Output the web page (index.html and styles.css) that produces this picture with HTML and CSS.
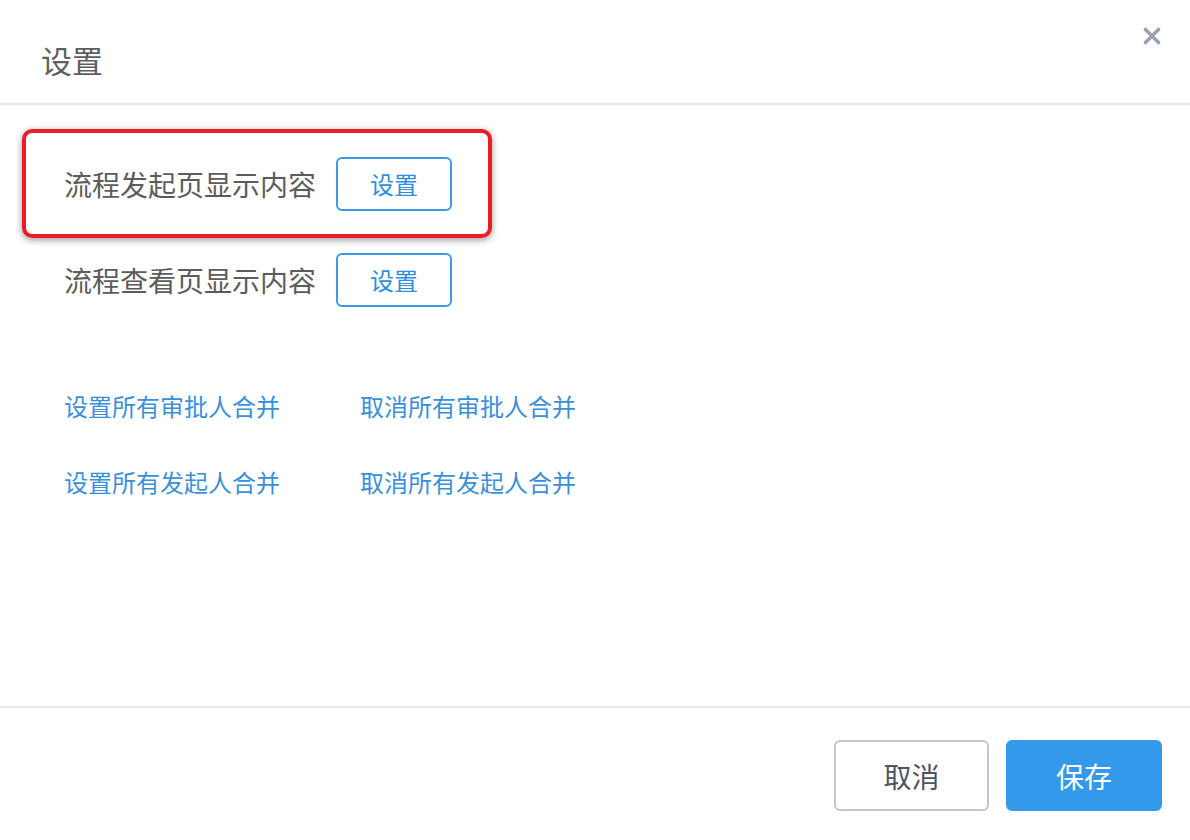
FILE: index.html
```html
<!DOCTYPE html>
<html lang="zh-CN">
<head>
<meta charset="utf-8">
<title>设置</title>
<link rel="stylesheet" href="styles.css">
</head>
<body>
<div class="dialog">
  <header class="header">
    <h1 class="title">设置</h1>
    <button class="close" aria-label="关闭">
      <svg width="18" height="18" viewBox="0 0 18 18"><path d="M2.5 2.5 L15.5 15.5 M15.5 2.5 L2.5 15.5" stroke="#9ba1ad" stroke-width="3.6" stroke-linecap="round" fill="none"/></svg>
    </button>
  </header>
  <main class="main">
    <div class="rows">
      <div class="row">
        <span class="label">流程发起页显示内容</span>
        <button class="btn-outline">设置</button>
      </div>
      <div class="row">
        <span class="label">流程查看页显示内容</span>
        <button class="btn-outline">设置</button>
      </div>
    </div>
    <div class="links">
      <a class="link">设置所有审批人合并</a>
      <a class="link">取消所有审批人合并</a>
      <a class="link">设置所有发起人合并</a>
      <a class="link">取消所有发起人合并</a>
    </div>
    <div class="highlight"></div>
  </main>
  <footer class="footer">
    <button class="btn btn-cancel">取消</button>
    <button class="btn btn-primary">保存</button>
  </footer>
</div>
</body>
</html>
```

FILE: styles.css
```css
* { box-sizing: border-box; }
html, body { margin: 0; padding: 0; background: #fff; }
body {
  font-family: "Noto Sans CJK SC", "Noto Sans", "Liberation Sans", sans-serif;
}
.dialog {
  position: relative;
  width: 1190px;
  height: 840px;
  display: flex;
  flex-direction: column;
  background: #fff;
}
.header {
  position: relative;
  height: 105px;
  padding: 40px 0 0 41px;
  border-bottom: 2px solid #e9e9e9;
}
.title {
  margin: 0;
  font-size: 31px;
  line-height: 40px;
  font-weight: 400;
  color: #5e5e5e;
}
.close {
  position: absolute;
  left: 1143px;
  top: 27px;
  width: 18px;
  height: 18px;
  padding: 0;
  border: 0;
  background: none;
  display: block;
}
.close svg { display: block; }
.main {
  position: relative;
  flex: 1;
  padding: 52px 0 0 64px;
}
.rows {
  display: flex;
  flex-direction: column;
  gap: 42px;
}
.row {
  display: flex;
  align-items: center;
  gap: 20px;
}
.label {
  font-size: 28px;
  line-height: 40px;
  color: #5c5c5c;
}
.btn-outline {
  width: 116px;
  height: 54px;
  border: 2px solid #3d98e6;
  border-radius: 6px;
  background: #fff;
  color: #2f8edf;
  font-family: inherit;
  font-size: 24px;
  line-height: 1;
  padding: 0;
}
.links {
  margin-top: 83px;
  display: grid;
  grid-template-columns: 296px 296px;
  row-gap: 44px;
}
.link {
  font-size: 24px;
  line-height: 32px;
  color: #3a90d8;
  text-decoration: none;
}
.highlight {
  position: absolute;
  left: 22px;
  top: 24px;
  width: 470px;
  height: 109px;
  border: 4px solid #ec1c24;
  border-radius: 10px;
  box-shadow: 0 2px 7px rgba(0, 0, 0, 0.4);
  pointer-events: none;
}
.footer {
  height: 134px;
  border-top: 2px solid #e9e9e9;
  padding: 32px 28px 0 0;
  display: flex;
  justify-content: flex-end;
  align-items: flex-start;
  gap: 17px;
}
.btn {
  width: 155px;
  height: 71px;
  border-radius: 6px;
  font-family: inherit;
  font-size: 28px;
  line-height: 1;
  padding: 0;
}
.btn-cancel {
  background: #fff;
  border: 2px solid #c3c6cc;
  color: #4a5567;
}
.btn-primary {
  width: 156px;
  background: #3399ea;
  border: 2px solid #3399ea;
  color: #fff;
}
```
